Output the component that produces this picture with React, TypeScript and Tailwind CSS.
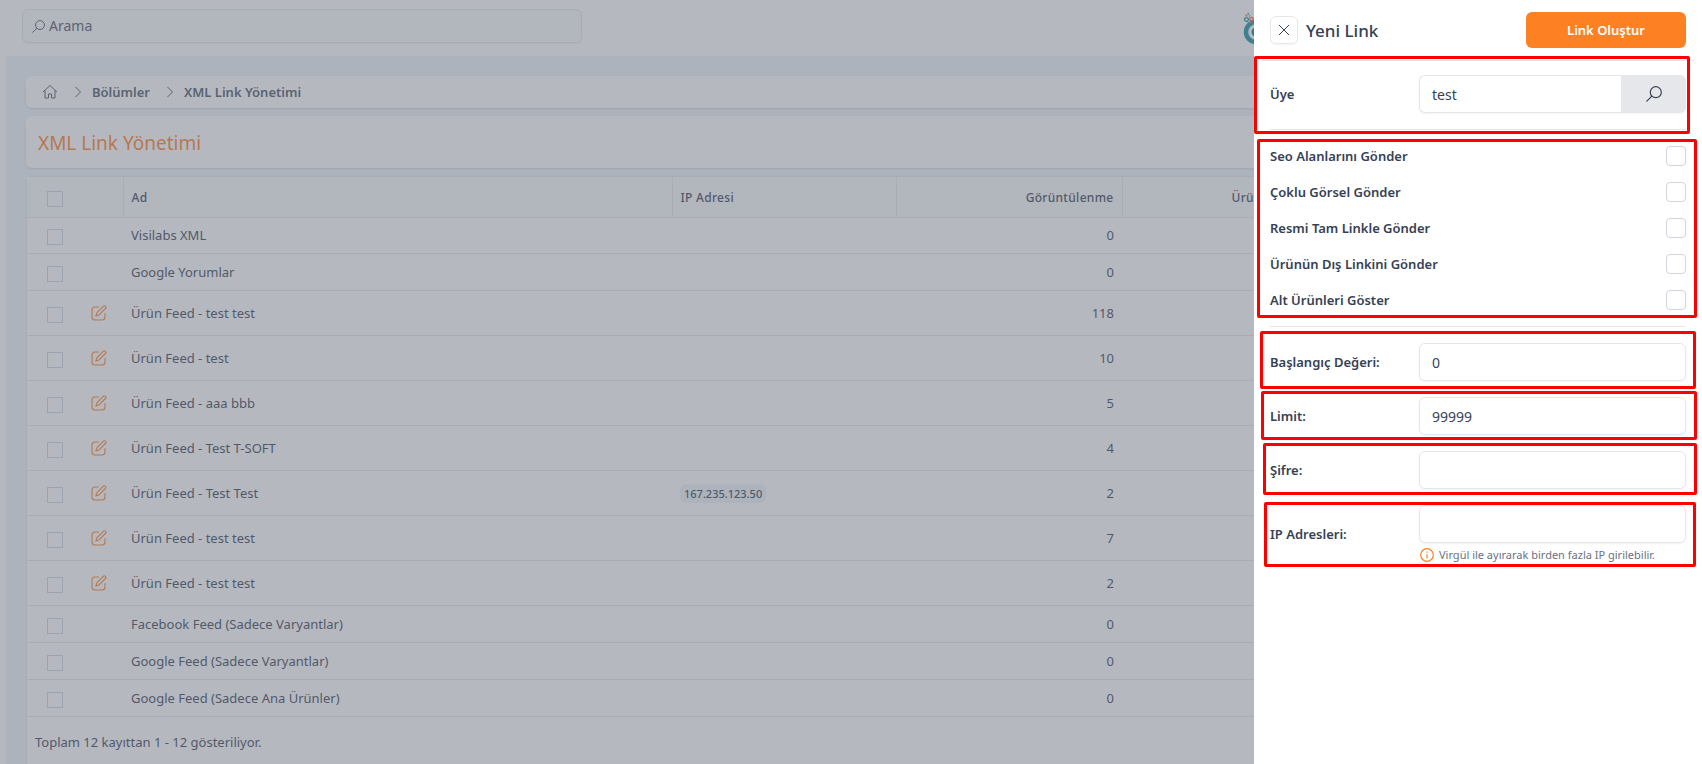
import type { ReactNode } from 'react'

type Row = { name: string; views: number; editable?: boolean; ip?: string }

const rows: Row[] = [
  { name: 'Visilabs XML', views: 0 },
  { name: 'Google Yorumlar', views: 0 },
  { name: 'Ürün Feed - test test', views: 118, editable: true },
  { name: 'Ürün Feed - test', views: 10, editable: true },
  { name: 'Ürün Feed - aaa bbb', views: 5, editable: true },
  { name: 'Ürün Feed - Test T-SOFT', views: 4, editable: true },
  { name: 'Ürün Feed - Test Test', views: 2, editable: true, ip: '167.235.123.50' },
  { name: 'Ürün Feed - test test', views: 7, editable: true },
  { name: 'Ürün Feed - test test', views: 2, editable: true },
  { name: 'Facebook Feed (Sadece Varyantlar)', views: 0 },
  { name: 'Google Feed (Sadece Varyantlar)', views: 0 },
  { name: 'Google Feed (Sadece Ana Ürünler)', views: 0 },
]

const options = [
  'Seo Alanlarını Gönder',
  'Çoklu Görsel Gönder',
  'Resmi Tam Linkle Gönder',
  'Ürünün Dış Linkini Gönder',
  'Alt Ürünleri Göster',
]

// red frames drawn over the drawer sections
const frames = [
  'left-0 right-3 top-14 h-[78px]',
  'left-[3px] right-[5px] top-[139px] h-[179px]',
  'left-[6px] right-[6px] top-[331px] h-[58px]',
  'left-[7px] right-[5px] top-[391px] h-[49px]',
  'left-[9px] right-[5px] top-[443px] h-[52px]',
  'left-[10px] right-[6px] top-[502px] h-[65px]',
]

const inputClass =
  'h-[38px] w-full rounded-md border border-gray-200 bg-white px-3 text-sm text-gray-700 shadow-xs outline-none'

function SearchIcon({ className }: { className: string }) {
  return (
    <svg viewBox="0 0 16 16" fill="none" stroke="currentColor" strokeWidth="1.2" className={className}>
      <circle cx="9.8" cy="6.2" r="5.5" />
      <path d="M5.8 10.2 0.8 15.2" strokeLinecap="round" />
    </svg>
  )
}

function EditIcon() {
  return (
    <svg
      viewBox="0 0 16 16"
      fill="none"
      stroke="currentColor"
      strokeWidth="1.1"
      strokeLinejoin="round"
      strokeLinecap="round"
      className="size-4"
    >
      <path d="M7.5 2H4a3 3 0 0 0-3 3v7a3 3 0 0 0 3 3h7a3 3 0 0 0 3-3V8.5" />
      <path d="M12.2 1.3a1.5 1.5 0 0 1 2.2 2.2L8 9.9l-3.2 1.2L6 7.6z" />
    </svg>
  )
}

function Chevron() {
  return (
    <svg viewBox="0 0 8 12" fill="none" stroke="currentColor" className="mr-2.5 ml-4 h-3 w-2">
      <path d="m1.5 1 5 5-5 5" />
    </svg>
  )
}

function Logo() {
  return (
    <svg viewBox="0 0 32 32" fill="none" className="h-8 w-8">
      <circle cx="13" cy="20" r="10" stroke="#0e8fa0" strokeWidth="4.5" />
      <circle cx="13" cy="20" r="4.5" fill="#0e7f90" />
      <circle cx="3.5" cy="7.5" r="1.9" stroke="#0e8fa0" strokeWidth="1.3" />
      <circle cx="8.5" cy="7" r="1.7" stroke="#f0693c" strokeWidth="1.3" />
      <circle cx="7.5" cy="10.5" r="0.9" fill="#f0693c" />
      <circle cx="3.4" cy="3.6" r="1.1" fill="#f0693c" />
      <circle cx="5.2" cy="1.6" r="0.9" fill="#0e8fa0" />
      <circle cx="6.4" cy="4" r="0.7" fill="#0e8fa0" />
    </svg>
  )
}

function TableCheckbox({ label }: { label: string }) {
  return (
    <input
      type="checkbox"
      aria-label={label}
      className="mt-1 block size-4 appearance-none border border-[#cbd5e1]"
    />
  )
}

function Field({ id, label, children }: { id: string; label: string; children: ReactNode }) {
  return (
    <div className="flex items-center">
      <label htmlFor={id} className="w-[149px] shrink-0 pt-0.5 text-[13px] font-semibold">
        {label}
      </label>
      <div className="flex-1">{children}</div>
    </div>
  )
}

function LinkTable() {
  return (
    <div className="mt-2 min-h-[620px] rounded-t-md border border-gray-200 bg-white">
      <table className="w-full table-fixed border-collapse text-[13px] text-gray-700">
        <colgroup>
          <col className="w-[50px]" />
          <col className="w-[46px]" />
          <col className="w-[549px]" />
          <col className="w-56" />
          <col className="w-[226px]" />
          <col />
        </colgroup>
        <thead>
          <tr className="h-10 border-b border-gray-200 bg-gray-50 text-left text-[12px] tracking-wide">
            <th className="pl-5">
              <TableCheckbox label="Tümünü seç" />
            </th>
            <th className="border-r border-gray-200" />
            <th className="border-r border-gray-200 px-2 pt-0.5 font-medium">Ad</th>
            <th className="border-r border-gray-200 px-2 pt-0.5 font-medium">IP Adresi</th>
            <th className="border-r border-gray-200 px-2 pt-0.5 text-right font-medium">Görüntülenme</th>
            <th className="pt-0.5 pl-[109px] font-medium">Ürün</th>
          </tr>
        </thead>
        <tbody>
          {rows.map((row, i) => (
            <tr
              key={i}
              className={
                row.editable ? 'h-[45px] border-b border-gray-200' : 'h-[37px] border-b border-gray-200 first:h-9'
              }
            >
              <td className="pl-5">
                <TableCheckbox label={row.name} />
              </td>
              <td className="pl-[14px]">
                {row.editable && (
                  <button type="button" aria-label="Düzenle" className="block text-[#fd8122]">
                    <EditIcon />
                  </button>
                )}
              </td>
              <td className="px-2 pt-0.5">{row.name}</td>
              <td className="px-2 pt-0.5">
                {row.ip && (
                  <span className="rounded-md bg-[#eff5f9] px-1 py-0.5 text-[11px] font-medium">{row.ip}</span>
                )}
              </td>
              <td className="px-2 pt-0.5 text-right">{row.views}</td>
              <td />
            </tr>
          ))}
        </tbody>
      </table>
      <p className="px-2 py-[15px] text-[13px] leading-5 text-gray-700">Toplam 12 kayıttan 1 - 12 gösteriliyor.</p>
    </div>
  )
}

function Drawer() {
  return (
    <aside className="absolute inset-y-0 right-0 w-full max-w-md bg-white text-gray-700">
      <header className="mx-2 flex h-[61px] items-center border-b border-gray-200 px-2">
        <button
          type="button"
          aria-label="Kapat"
          className="flex size-7 items-center justify-center rounded-md border border-gray-200 shadow-xs"
        >
          <svg viewBox="0 0 12 12" stroke="currentColor" className="size-3">
            <path d="m1 1 10 10M11 1 1 11" />
          </svg>
        </button>
        <h2 className="ml-2 flex-1 pt-0.5 text-[17px] font-medium">Yeni Link</h2>
        <button type="button" className="h-9 w-40 rounded-md bg-[#fd8122] pt-0.5 text-[13px] font-semibold text-white">
          Link Oluştur
        </button>
      </header>

      <form className="px-4">
        <div className="border-b border-gray-200 pt-[14px] pb-4">
          <Field id="uye" label="Üye">
            <div className="flex rounded-md shadow-xs">
              <input
                id="uye"
                defaultValue="test"
                className="h-[38px] w-full min-w-0 flex-1 rounded-l-md border border-r-0 border-gray-200 px-3 text-sm outline-none"
              />
              <button
                type="button"
                aria-label="Üye ara"
                className="flex w-[65px] items-center justify-center rounded-r-md bg-gray-200"
              >
                <SearchIcon className="size-4" />
              </button>
            </div>
          </Field>
        </div>

        <div className="flex flex-col gap-4 border-b border-gray-200 py-4">
          {options.map((option) => (
            <label key={option} className="flex h-5 items-center justify-between text-[13px] font-semibold">
              <span className="pt-0.5">{option}</span>
              <input type="checkbox" className="size-5 appearance-none rounded-sm border border-gray-300" />
            </label>
          ))}
        </div>

        <div className="flex flex-col gap-4 py-4">
          <Field id="baslangic" label="Başlangıç Değeri:">
            <input id="baslangic" defaultValue="0" className={inputClass} />
          </Field>
          <Field id="limit" label="Limit:">
            <input id="limit" defaultValue="99999" className={inputClass} />
          </Field>
          <Field id="sifre" label="Şifre:">
            <input id="sifre" className={inputClass} />
          </Field>
          <Field id="ip" label="IP Adresleri:">
            <input id="ip" className={inputClass} />
            <p className="mt-1 flex items-center gap-1 text-[11px] leading-4 text-gray-500">
              <svg viewBox="0 0 16 16" fill="none" stroke="#fd8122" strokeWidth="1.2" className="size-4">
                <circle cx="8" cy="8" r="6.3" />
                <path d="M8 7.2v4M8 4.6v1.2" />
              </svg>
              Virgül ile ayırarak birden fazla IP girilebilir.
            </p>
          </Field>
        </div>
      </form>

      {frames.map((frame) => (
        <div key={frame} className={`pointer-events-none absolute rounded-xs border-3 border-[#ff0000] ${frame}`} />
      ))}
    </aside>
  )
}

export default function App() {
  return (
    <div className="relative h-screen overflow-hidden bg-white font-['Segoe_UI','Noto_Sans',sans-serif]">
      <header className="flex h-14 items-center justify-between pr-[427px] pl-[22px]">
        <div className="mb-1 flex h-[34px] w-[560px] items-center gap-1 rounded-md border border-gray-200 bg-gray-50 px-[9px] text-gray-600 shadow-xs">
          <SearchIcon className="size-[13px] shrink-0" />
          <input
            type="search"
            aria-label="Arama"
            placeholder="Arama"
            className="w-full bg-transparent text-sm outline-none placeholder:text-gray-600"
          />
        </div>
        <Logo />
      </header>

      <main className="ml-1.5 bg-[#eff5f9] px-5 pt-5">
        <nav className="flex h-8 items-center rounded-md bg-white px-4 text-[13px] font-semibold text-gray-600 shadow-sm">
          <a href="#" aria-label="Ana sayfa">
            <svg viewBox="0 0 16 16" fill="none" stroke="currentColor" className="size-4">
              <path d="M1 8 8 1.5 15 8M3 6.5V14h3.5v-4h3v4H13V6.5" />
            </svg>
          </a>
          <Chevron />
          <a href="#" className="pt-0.5">
            Bölümler
          </a>
          <Chevron />
          <a href="#" className="pt-0.5">
            XML Link Yönetimi
          </a>
        </nav>
        <div className="mt-2 flex h-[52px] items-center rounded-md bg-white px-3 shadow-sm">
          <h1 className="pt-0.5 text-[19px] text-[#fd8122]">XML Link Yönetimi</h1>
        </div>
        <LinkTable />
      </main>

      <div className="absolute inset-0 bg-[#6b7280]/50" />
      <Drawer />
    </div>
  )
}
